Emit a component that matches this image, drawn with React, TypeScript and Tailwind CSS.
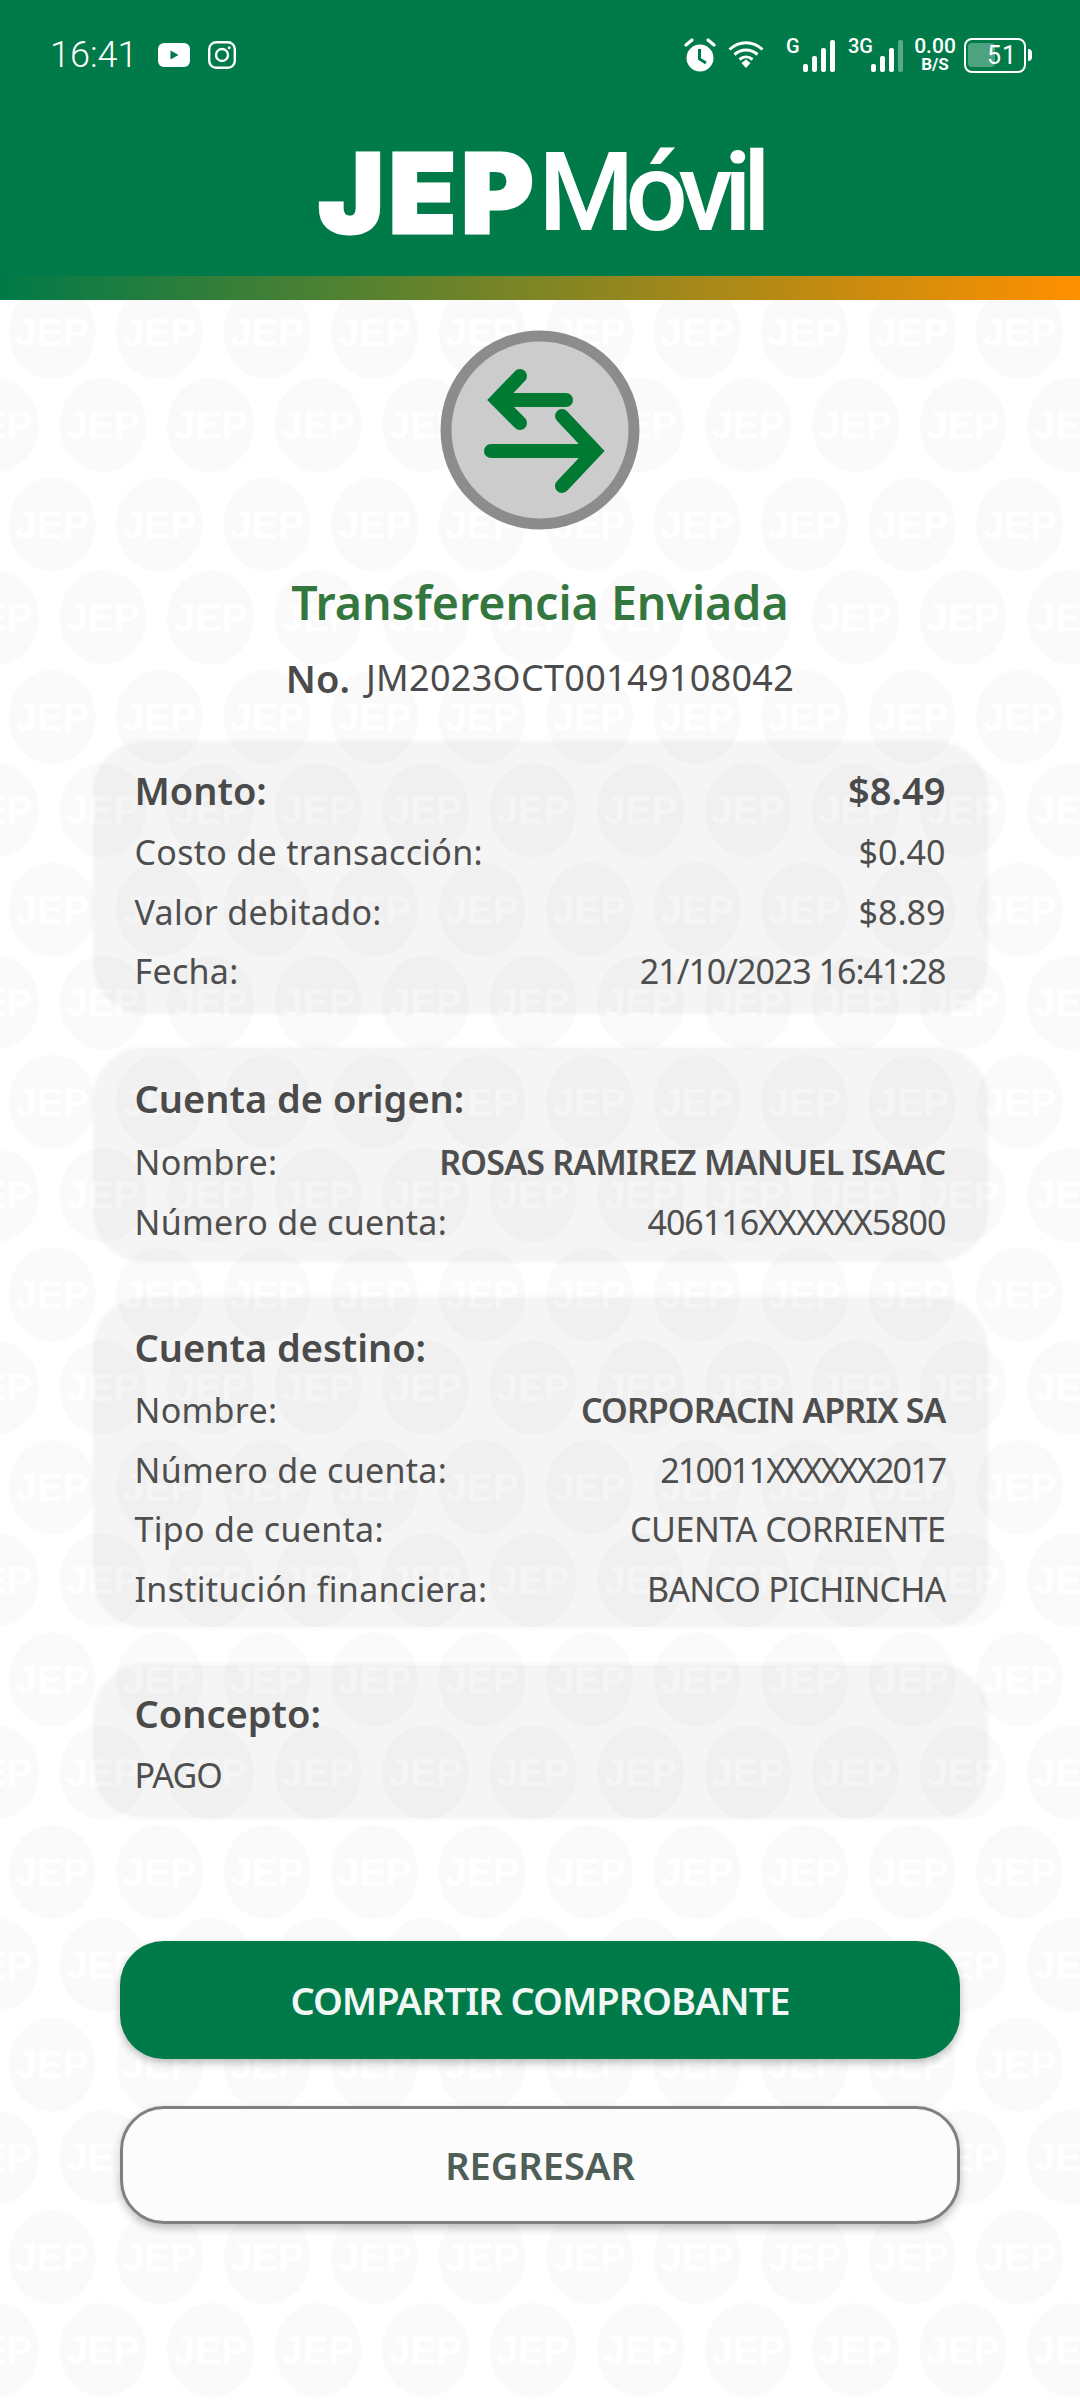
import React from "react";

const font = "font-['Noto_Sans',sans-serif]";

type RowData = { label: string; value?: string; valueClass?: string; labelClass?: string };

const Row = ({ label, value, valueClass, labelClass }: RowData) => (
  <div className="flex h-[59.5px] items-center justify-between text-[34px] text-[#4e4e4e] tracking-[0.3px]">
    <span className={labelClass}>{label}</span>
    <span className={valueClass}>{value}</span>
  </div>
);

const Card = ({
  title,
  value,
  rows,
  className,
  headClass = "h-[65px]",
}: {
  title: string;
  value?: string;
  rows: RowData[];
  className: string;
  headClass?: string;
}) => (
  <section
    className={`w-[893px] rounded-[50px] bg-black/[0.04] ring-[3px] ring-black/[0.015] px-[41px] ${className}`}
  >
    <div className={`flex items-center justify-between text-[38px] font-semibold text-[#4a4a4a] ${headClass}`}>
      <span>{title}</span>
      {value && <span>{value}</span>}
    </div>
    {rows.map((r) => (
      <Row key={r.label} {...r} />
    ))}
  </section>
);

const Signal = ({ lastDim }: { lastDim?: boolean }) => (
  <svg width="33" height="33" viewBox="0 0 33 33" fill="white">
    <rect x="0" y="25" width="5" height="8" rx="2" />
    <rect x="9" y="17" width="5" height="16" rx="2" />
    <rect x="18" y="9" width="5" height="24" rx="2" />
    <rect x="27" y="1" width="5" height="32" rx="2" opacity={lastDim ? 0.35 : 1} />
  </svg>
);

const StatusBar = () => (
  <div className="flex h-[108px] items-center justify-between pl-[50px] pr-[48px] pt-[2px] text-white">
    <div className="flex items-center">
      <span className="font-['Roboto',sans-serif] text-[36px] font-light w-[108px]">16:41</span>
      <svg width="32" height="24" viewBox="0 0 32 24">
        <rect width="32" height="24" rx="6" fill="white" />
        <path d="M12.5 7.5v9l8-4.500z" fill="#007a48" />
      </svg>
      <svg width="28" height="28" viewBox="0 0 28 28" fill="none" stroke="white" strokeWidth="2.4" className="ml-[18px]">
        <rect x="1.2" y="1.2" width="25.6" height="25.6" rx="7" />
        <circle cx="14" cy="14" r="6" />
        <circle cx="21.2" cy="6.8" r="1.5" fill="white" stroke="none" />
      </svg>
    </div>
    <div className="flex items-center font-['Roboto',sans-serif]">
      <svg width="32" height="34" viewBox="0 0 32 34" fill="none">
        <circle cx="16" cy="20" r="13.5" fill="white" />
        <path d="M15.5 11v10l6.500 4" stroke="#007a48" strokeWidth="3" />
        <path d="M2 7l6-5M30 7l-6-5" stroke="white" strokeWidth="3.2" strokeLinecap="round" />
      </svg>
      <svg width="36" height="28" viewBox="0 0 36 28" fill="none" stroke="white" strokeWidth="3" className="ml-[12px]">
        <path d="M1.500 8.500c10-9 23-9 33 0" />
        <path d="M6.500 13.500c7-6 16-6 23 0" />
        <path d="M11.500 18.500c4-3.400 9-3.400 13 0" />
        <path d="M13.500 22l4.500-3.500 4.500 3.500-4.500 5z" fill="white" stroke="none" />
      </svg>
      <div className="relative ml-[22px] flex h-[34px] w-[50px] items-end justify-end">
        <span className="absolute left-0 top-[-2px] text-[20px] font-medium leading-[20px]">G</span>
        <Signal />
      </div>
      <div className="relative ml-[12px] flex h-[34px] w-[56px] items-end justify-end">
        <span className="absolute left-0 top-[-2px] text-[20px] font-medium leading-[20px]">3G</span>
        <Signal lastDim />
      </div>
      <div className="ml-[11px] flex w-[40px] flex-col items-center">
        <span className="text-[21px] font-medium leading-[19px]">0.00</span>
        <span className="text-[17px] font-bold leading-[17px]">B/S</span>
      </div>
      <div className="relative ml-[9px] flex h-[35px] w-[62px] items-center justify-center rounded-[8px] border-[2.5px] border-white">
        <div className="absolute left-[2px] top-[3px] h-[24px] w-[27px] rounded-[4px] bg-white/30" />
        <span className="relative text-[25px] leading-none tracking-[1px] pl-[14px]">51</span>
      </div>
      <div className="ml-[2px] h-[12px] w-[4px] rounded-r-full bg-white" />
    </div>
  </div>
);

export default function App() {
  return (
    <div className={`relative h-[2400px] w-[1080px] overflow-hidden bg-white ${font}`}>
      <svg className="absolute inset-0" width="1080" height="2400">
        <defs>
          <pattern id="jep" width="107.5" height="192.5" x="0" y="285" patternUnits="userSpaceOnUse">
            <ellipse cx="52" cy="47" rx="43.5" ry="47" fill="#fafafa" />
            <text x="52" y="61" textAnchor="middle" fontFamily="Liberation Sans" fontWeight="700" fontSize="39" fill="#fff">JEP</text>
            <ellipse cx="103" cy="140" rx="43.5" ry="47" fill="#fafafa" />
            <text x="103" y="154" textAnchor="middle" fontFamily="Liberation Sans" fontWeight="700" fontSize="39" fill="#fff">JEP</text>
            <ellipse cx="-4.5" cy="140" rx="43.5" ry="47" fill="#fafafa" />
            <text x="-4.5" y="154" textAnchor="middle" fontFamily="Liberation Sans" fontWeight="700" fontSize="39" fill="#fff">JEP</text>
          </pattern>
        </defs>
        <rect x="0" y="285" width="1080" height="2115" fill="url(#jep)" />
      </svg>

      <header className="relative h-[276px] bg-[#007a48]">
        <StatusBar />
        <div className="mt-[20px] flex h-[130px] items-center justify-center text-white text-[110px] leading-none">
          <span className="font-['Inter',sans-serif] font-black tracking-[5px] [-webkit-text-stroke:3px_white]">JEP</span>
          <span className="font-['Roboto',sans-serif] font-medium tracking-[-9px]">Móvil</span>
        </div>
      </header>
      <div className="relative h-[24px] bg-linear-to-r/srgb from-[#007a48] to-[#ff9000]" />

      <main className="relative flex flex-col items-center">
        <svg width="200" height="200" viewBox="0 0 200 200" className="mt-[30px]">
          <circle cx="100" cy="100" r="94" fill="#cccccc" stroke="#8c8c8c" strokeWidth="11" />
          <g fill="none" stroke="#007a33" strokeWidth="14" strokeLinecap="round">
            <path d="M80 46L57 70l23 23" />
            <path d="M62 70h64" />
            <path d="M122 86l33 35-33 35" />
            <path d="M51 121h99" />
          </g>
        </svg>
        <h1 className="mt-[42px] text-[46.5px] font-semibold leading-[60px] text-[#33773f]">Transferencia Enviada</h1>
        <div className="mt-[21px] flex items-center gap-[16px] text-[#4b4b4b] text-[36px] leading-[50px]">
          <span className="font-semibold text-[38px]">No.</span>
          <span className="tracking-[0.3px]">JM2023OCT00149108042</span>
        </div>

        <Card
          title="Monto:"
          value="$8.49"
          className="mt-[39px] h-[271px] pt-[16px]"
          rows={[
            { label: "Costo de transacción:", value: "$0.40", valueClass: "tracking-[0px]" },
            { label: "Valor debitado:", value: "$8.89", valueClass: "tracking-[0px]" },
            { label: "Fecha:", value: "21/10/2023 16:41:28", valueClass: "tracking-[-1px]" },
          ]}
        />
        <Card
          title="Cuenta de origen:"
          className="mt-[35px] h-[213px] pt-[16px]"
          headClass="h-[69px]"
          rows={[
            { label: "Nombre:", value: "ROSAS RAMIREZ MANUEL ISAAC", valueClass: "font-semibold tracking-[-0.8px]" },
            { label: "Número de cuenta:", value: "406116XXXXXX5800", valueClass: "tracking-[-1px]" },
          ]}
        />
        <Card
          title="Cuenta destino:"
          className="mt-[37px] h-[329px] pt-[15px]"
          headClass="h-[68px]"
          rows={[
            { label: "Nombre:", value: "CORPORACIN APRIX SA", valueClass: "font-semibold tracking-[-0.9px]" },
            { label: "Número de cuenta:", value: "210011XXXXXX2017", valueClass: "tracking-[-1.8px]" },
            { label: "Tipo de cuenta:", value: "CUENTA CORRIENTE", valueClass: "tracking-[-0.4px]" },
            { label: "Institución financiera:", value: "BANCO PICHINCHA", valueClass: "tracking-[-0.8px]" },
          ]}
        />
        <Card
          title="Concepto:"
          className="mt-[38px] h-[153px] pt-[16px]"
          rows={[{ label: "PAGO", labelClass: "tracking-[-1px]" }]}
        />

        <button className="mt-[123px] flex h-[118px] w-[840px] items-center justify-center rounded-[44px] bg-[#007a48] text-[38px] tracking-[-1px] font-semibold text-[#f1f7f5] shadow-[0_4px_8px_rgba(0,0,0,0.25)]">
          COMPARTIR COMPROBANTE
        </button>
        <button className="mt-[47px] flex h-[118px] w-[840px] items-center justify-center rounded-[44px] border-[3px] border-[#7f7f84] bg-[#fcfcfc] text-[38px] font-semibold text-[#4f5f57] shadow-[0_4px_8px_rgba(0,0,0,0.25)]">
          REGRESAR
        </button>
      </main>
    </div>
  );
}
